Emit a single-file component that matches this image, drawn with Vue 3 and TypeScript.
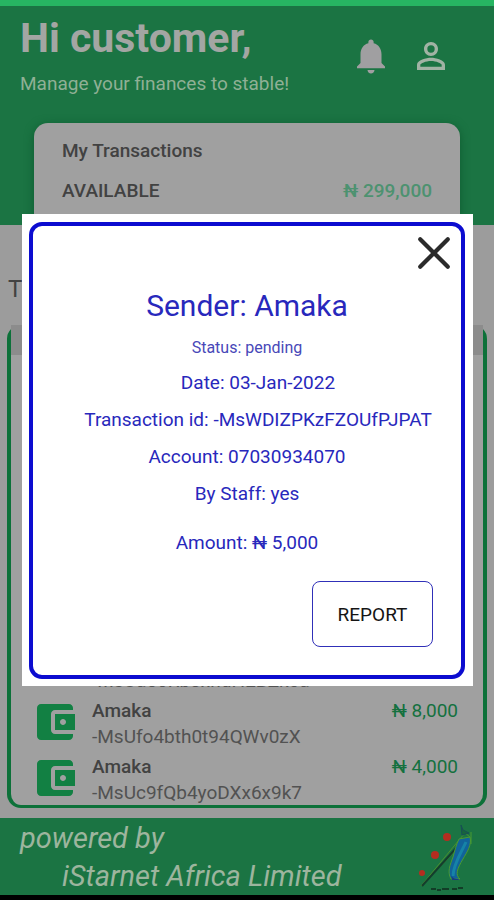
<script setup lang="ts">
import { ref } from 'vue'

interface Transaction {
  name: string
  id: string
  amount: string
}

const transactions: Transaction[] = [
  { name: 'Amaka', id: '-MsUa5oRb3xhdHEBZk0a', amount: '₦ 5,000' },
  { name: 'Amaka', id: '-MsUfo4bth0t94QWv0zX', amount: '₦ 8,000' },
  { name: 'Amaka', id: '-MsUc9fQb4yoDXx6x9k7', amount: '₦ 4,000' },
]

const open = ref(true)
</script>

<template>
  <div class="screen">
    <header class="header">
      <div class="greeting">
        <div>
          <h1>Hi customer,</h1>
          <p>Manage your finances to stable!</p>
        </div>
        <nav class="actions">
          <button type="button" class="icon-button" aria-label="Notifications">
            <svg viewBox="0 0 24 24" aria-hidden="true">
              <path fill="#a09fa1" d="M12 22c1.1 0 2-.9 2-2h-4c0 1.1.89 2 2 2zm6-6v-5c0-3.07-1.64-5.64-4.5-6.32V4c0-.83-.67-1.5-1.5-1.5s-1.5.67-1.5 1.5v.68C7.63 5.36 6 7.92 6 11v5l-2 2v1h16v-1l-2-2z" />
            </svg>
          </button>
          <button type="button" class="icon-button" aria-label="Profile">
            <svg viewBox="0 0 24 24" aria-hidden="true">
              <path fill="#a1b3a4" d="M12 5.9a2.1 2.1 0 1 1 0 4.2 2.1 2.1 0 0 1 0-4.2m0 9c2.97 0 6.1 1.46 6.1 2.1v1.1H5.9V17c0-.64 3.13-2.1 6.1-2.1M12 4C9.79 4 8 5.79 8 8s1.79 4 4 4 4-1.79 4-4-1.79-4-4-4zm0 9c-2.67 0-8 1.34-8 4v3h16v-3c0-2.66-5.33-4-8-4z" />
            </svg>
          </button>
        </nav>
      </div>
      <section class="balance">
        <h2>My Transactions</h2>
        <div class="available">
          <span>AVAILABLE</span>
          <strong>₦ 299,000</strong>
        </div>
      </section>
    </header>

    <main class="content">
      <h2 class="title">Transactions</h2>
      <section class="list">
        <div class="list-bar"></div>
        <ul>
          <li v-for="item in transactions" :key="item.id">
            <svg class="wallet" viewBox="0 0 24 24" aria-hidden="true">
              <path fill="#128043" d="M21 18v1c0 1.1-.9 2-2 2H5c-1.11 0-2-.9-2-2V5c0-1.1.89-2 2-2h14c1.1 0 2 .9 2 2v1h-9c-1.11 0-2 .9-2 2v8c0 1.1.89 2 2 2h9zm-9-2h10V8H12v8zm4-2.5c-.83 0-1.5-.67-1.5-1.5s.67-1.5 1.5-1.5 1.5.67 1.5 1.5-.67 1.5-1.5 1.5z" />
            </svg>
            <div class="who">
              <strong>{{ item.name }}</strong>
              <span>{{ item.id }}</span>
            </div>
            <span class="amount">{{ item.amount }}</span>
          </li>
        </ul>
      </section>
    </main>

    <footer class="footer">
      <p>powered by<br><span>iStarnet Africa Limited</span></p>
      <svg class="logo" viewBox="0 0 60 72" aria-hidden="true">
        <path d="M2 66 40 20 46 13 51 17 43 24Z" fill="none" stroke="#4b8f2d" stroke-width="1" />
        <path d="M3 66 39 26" stroke="#153d2c" stroke-width="2" />
        <path d="M40 19 51 17C53 25 48 32 44 39 38 49 36 55 41 59H32C28 52 31 45 34 37 36 30 37 25 40 19Z" fill="#11639a" stroke="#4b9a30" stroke-width="1" />
        <path d="M47 22C42 33 34 45 34 56" fill="none" stroke="#1683a7" stroke-width="3" />
        <path d="M32 54C33 60 38 58 41 60H33Z" fill="#173c83" />
        <path d="M42 5 44 10 50 13 43 15Z" fill="#17653c" stroke="#174f55" stroke-width="1" />
        <path d="M52 12V24" stroke="#4b9a30" stroke-width="1" />
        <g fill="#b52d20">
          <circle cx="28" cy="17" r="4" />
          <circle cx="16" cy="35" r="4" />
          <circle cx="3" cy="53" r="3" />
        </g>
        <path d="M12 69h5m1 1h4m1-1h7m3 0h5m1-1h5" stroke="#123d27" stroke-width="2" />
      </svg>
    </footer>
    <div class="system-bar"></div>

    <div v-if="open" class="overlay">
      <section class="dialog" role="dialog" aria-modal="true" aria-labelledby="sender">
        <div class="panel">
          <button type="button" class="close" aria-label="Close" @click="open = false">
            <svg viewBox="0 0 32 32" aria-hidden="true">
              <path d="M3 3 29 29M29 3 3 29" stroke="#2b2b2b" stroke-width="4" stroke-linecap="round" />
            </svg>
          </button>
          <h2 id="sender">Sender: Amaka</h2>
          <p class="status">Status: pending</p>
          <p class="indent">Date: 03-Jan-2022</p>
          <p class="indent">Transaction id: -MsWDIZPKzFZOUfPJPAT</p>
          <p>Account: 07030934070</p>
          <p>By Staff: yes</p>
          <p class="total">Amount: ₦ 5,000</p>
          <button type="button" class="report">REPORT</button>
        </div>
      </section>
    </div>
  </div>
</template>

<style>
body {
  margin: 0;
  background: #9c9c9c;
}
</style>

<style scoped>
* {
  box-sizing: border-box;
}

h1,
h2,
p,
ul {
  margin: 0;
  padding: 0;
}

button {
  font: inherit;
  padding: 0;
  background: none;
  border: 0;
  cursor: pointer;
}

svg {
  display: block;
}

.screen {
  display: flex;
  flex-direction: column;
  min-height: 100vh;
  font-family: Roboto, sans-serif;
  font-size: 19px;
  color: #424242;
  background: #9c9c9c;
}

.header {
  padding: 8px 34px 0;
  border-top: 6px solid #27b562;
  background: #1b7443;
}

.greeting {
  display: flex;
  justify-content: space-between;
  margin: 0 -14px;
}

.greeting h1 {
  font-size: 41px;
  line-height: 48px;
  font-weight: 700;
  color: #a3a6a3;
}

.greeting p {
  margin-top: 10px;
  line-height: 24px;
  color: #8fb095;
}

.actions {
  display: flex;
  gap: 18px;
  padding: 21px 22px 0 0;
}

.icon-button svg {
  width: 42px;
  height: 42px;
}

.icon-button {
  height: 42px;
}

.balance {
  height: 160px;
  margin: 27px 0 -58px;
  padding: 16px 28px;
  border-radius: 14px;
  background: #a0a0a0;
  box-shadow: 0 2px 10px #0e5c30;
}

.balance h2 {
  font-size: 19px;
  line-height: 24px;
  font-weight: 500;
}

.available {
  display: flex;
  justify-content: space-between;
  margin-top: 16px;
  line-height: 24px;
  font-weight: 500;
}

.available strong {
  font-weight: 500;
  color: #4d9270;
}

.content {
  display: flex;
  flex: 1;
  flex-direction: column;
  padding: 50px 7px 10px;
}

.title {
  padding-left: 1px;
  font-size: 24px;
  line-height: 28px;
  font-weight: 400;
}

.list {
  display: flex;
  flex: 1;
  flex-direction: column;
  justify-content: space-between;
  margin-top: 22px;
  border: solid #0d7139;
  border-width: 0 4px 3px;
  border-radius: 14px;
  background: #a0a0a0;
}

.list-bar {
  height: 30px;
  background: #8c8c8c;
}

.list ul {
  list-style: none;
}

.list li {
  display: flex;
  height: 56px;
  padding: 5px 25px 0 20px;
}

.wallet {
  width: 48px;
  height: 48px;
}

.who {
  display: flex;
  flex: 1;
  flex-direction: column;
  padding-left: 13px;
  line-height: 26px;
}

.who strong {
  font-weight: 500;
}

.who span {
  color: #525252;
}

.amount {
  line-height: 26px;
  color: #14713f;
}

.footer {
  display: flex;
  justify-content: space-between;
  padding: 1px 15px 0 20px;
  background: #1b7443;
}

.footer p {
  font-size: 29px;
  line-height: 38px;
  font-style: italic;
  color: #9db59e;
}

.footer p span {
  padding-left: 42px;
}

.logo {
  width: 60px;
  height: 72px;
  margin-top: 1px;
}

.system-bar {
  height: 5px;
  background: #000;
}

.overlay {
  position: fixed;
  inset: 0;
  display: flex;
  align-items: center;
  justify-content: center;
  padding: 0 21px 0 22px;
}

.dialog {
  flex: 1;
  min-width: 0;
  padding: 8px 8px 7px 7px;
  background: #fff;
}

.panel {
  display: flex;
  flex-direction: column;
  align-items: center;
  padding: 10px 28px 28px;
  border: 4px solid #0c0cd0;
  border-radius: 13px;
  color: #2828bc;
}

.close {
  align-self: flex-end;
  margin-right: -18px;
}

.close svg {
  width: 34px;
  height: 34px;
}

.panel h2 {
  margin-top: 16px;
  font-size: 30px;
  line-height: 40px;
  font-weight: 400;
}

.panel p {
  line-height: 37px;
}

.panel .status {
  margin-top: 5px;
  font-size: 16px;
  line-height: 33px;
  color: #4848b8;
}

.panel .indent {
  padding-left: 22px;
}

.panel .total {
  margin-top: 12px;
}

.report {
  align-self: flex-end;
  width: 121px;
  height: 66px;
  margin-top: 20px;
  border: 1px solid #3030b8;
  border-radius: 8px;
  color: #151515;
}
</style>
